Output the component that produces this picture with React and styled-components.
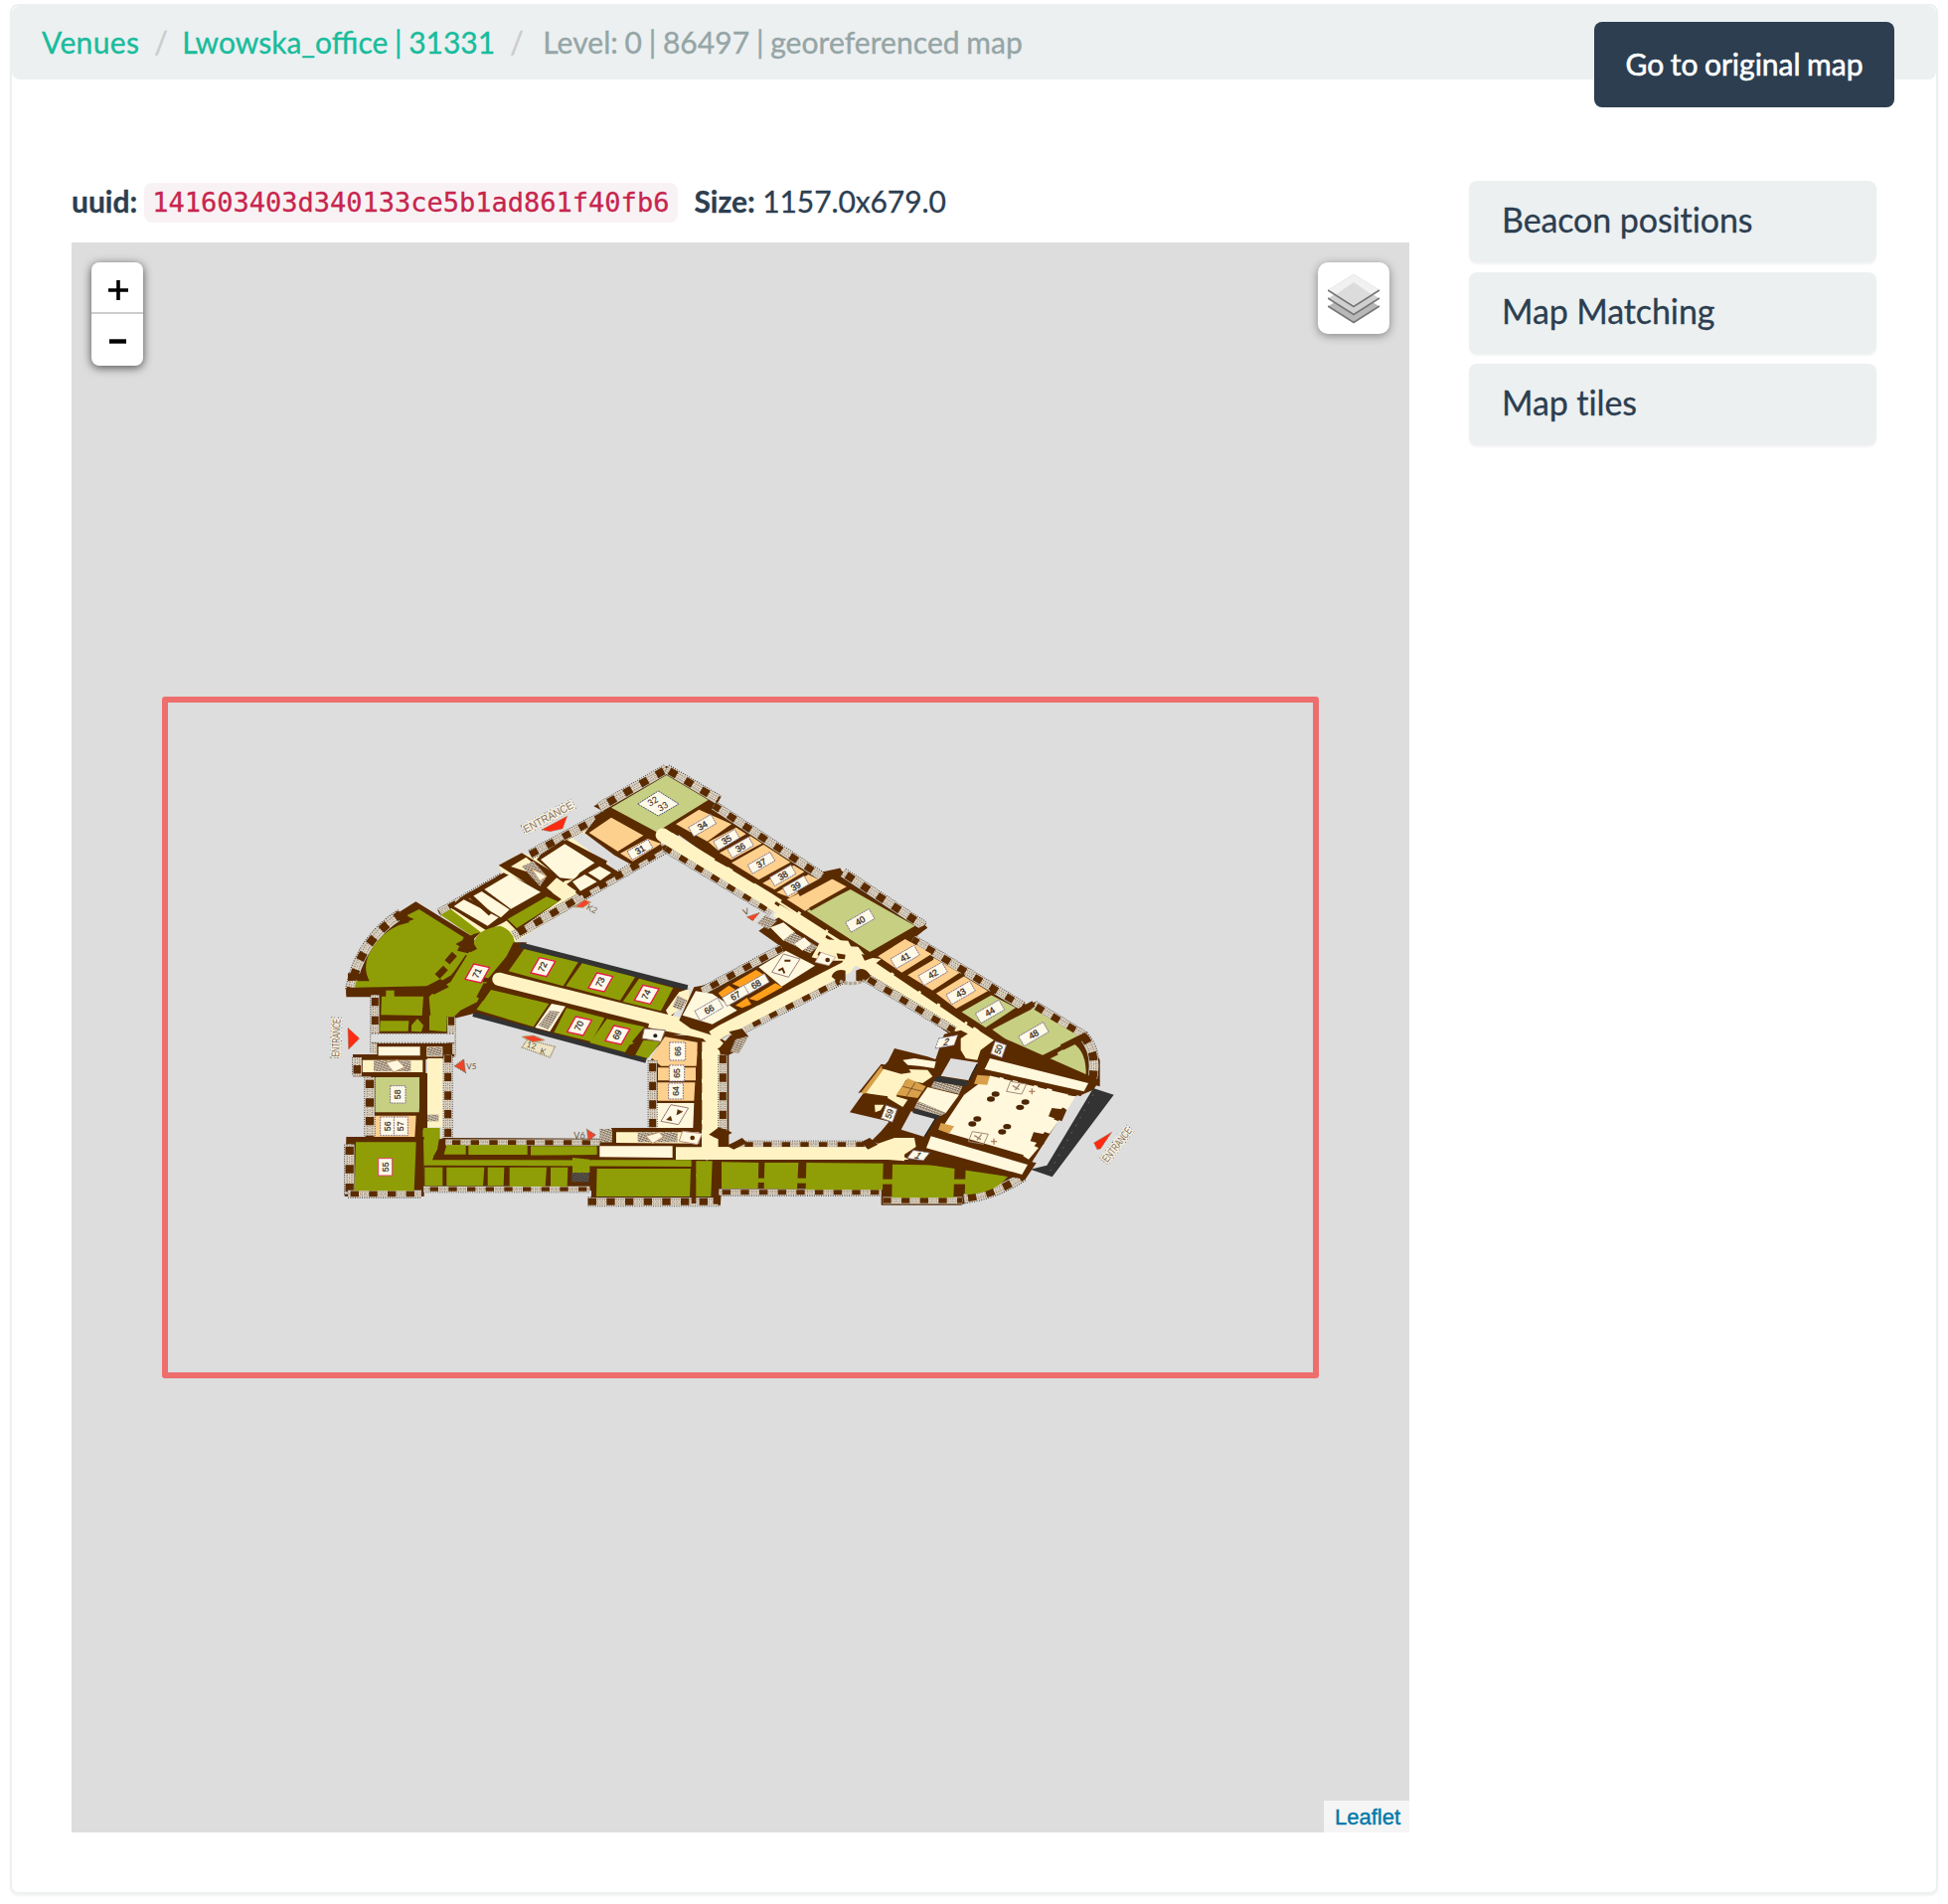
import React from "react";
import styled, { createGlobalStyle } from "styled-components";

const GlobalStyle = createGlobalStyle`
  *, *::before, *::after { box-sizing: border-box; }
  body {
    margin: 0;
    background: #fff;
    color: #2c3e50;
    font-family: Lato, "Liberation Sans", sans-serif;
    font-size: 30px;
  }
`;

const Page = styled.main`
  padding: 4px 10px 10px;
`;

const Panel = styled.section`
  height: 1902px;
  border: 2px solid #ecf0f1;
  border-radius: 8px;
  box-shadow: 0 2px 2px rgba(0, 0, 0, 0.05);
`;

const TopBar = styled.header`
  display: flex;
  align-items: flex-start;
  justify-content: space-between;
  height: 74px;
  padding: 0 42px 0 30px;
  background: #ecf0f1;
  border-radius: 8px;
`;

const Crumbs = styled.nav`
  display: flex;
  align-items: center;
  height: 72px;
  line-height: 42px;
  white-space: pre;
  -webkit-text-stroke-width: 0.35px;
`;

const CrumbLink = styled.a`
  color: #18bc9c;
  text-decoration: none;
  letter-spacing: ${(p) => p.$tracking || "0"};
  word-spacing: -1px;
`;

const CrumbText = styled.span`
  color: #95a5a6;
  letter-spacing: 0.07px;
  word-spacing: -1.1px;
`;

const Slash = styled.span`
  width: ${(p) => p.$width}px;
  padding-left: 15px;
  color: #ccc;
`;

const MapButton = styled.button`
  width: 302px;
  height: 86px;
  margin-top: 16px;
  padding: 0 0 2px;
  flex: none;
  border: 0;
  border-radius: 8px;
  background: #2c3e50;
  color: #fff;
  font: inherit;
  line-height: 42px;
  word-spacing: -1.2px;
  -webkit-text-stroke: 0.6px #fff;
`;

const Body = styled.div`
  display: grid;
  grid-template-columns: 1346px 410px;
  column-gap: 60px;
  padding: 102px 0 0 60px;
`;

const Info = styled.div`
  display: flex;
  align-items: flex-start;
  height: 62px;
  line-height: 40px;
  white-space: pre;
  -webkit-text-stroke-width: 0.3px;
`;

const SizeValue = styled.span`
  letter-spacing: -0.1px;
`;

const Code = styled.code`
  height: 40px;
  margin: 2px 16px 0 7px;
  padding: 0 9px 0 8px;
  border-radius: 8px;
  background: #f9f2f4;
  color: #c7254e;
  font: 27px/39px "DejaVu Sans Mono", monospace;
`;

const MapArea = styled.div`
  position: relative;
  height: 1600px;
  background: #ddd;
`;

const MapCanvas = styled.svg`
  display: block;
`;

const ZoomControl = styled.div`
  position: absolute;
  top: 20px;
  left: 20px;
  width: 52px;
  border-radius: 8px;
  background: #fff;
  box-shadow: 0 2px 10px rgba(0, 0, 0, 0.65);
`;

const ZoomButton = styled.a`
  display: flex;
  align-items: center;
  justify-content: center;
  height: 52px;
  padding: 5px 0 0 2px;
  &:first-child { border-bottom: 2px solid #ccc; }
  & + & { padding: 3px 0 0 1px; }
`;

const LayersControl = styled.a`
  position: absolute;
  top: 20px;
  right: 20px;
  display: flex;
  align-items: center;
  justify-content: center;
  width: 72px;
  height: 72px;
  border-radius: 10px;
  background: #fff;
  box-shadow: 0 2px 10px rgba(0, 0, 0, 0.4);
`;

const Attribution = styled.div`
  position: absolute;
  right: 0;
  bottom: 0;
  width: 86px;
  height: 32px;
  padding-left: 11px;
  background: rgba(255, 255, 255, 0.7);
  color: #0078a8;
  font: 22px/33px "Liberation Sans", sans-serif;
  -webkit-text-stroke-width: 0.4px;
`;

const Sidebar = styled.aside`
  display: flex;
  flex-direction: column;
  gap: 10px;
`;

const SideItem = styled.div`
  height: 82px;
  padding-left: 33px;
  border-radius: 8px;
  background: #ecf0f1;
  box-shadow: 0 2px 2px rgba(0, 0, 0, 0.05);
  font-size: 34px;
  line-height: 78px;
  font-variant-ligatures: no-common-ligatures;
  letter-spacing: -0.1px;
  -webkit-text-stroke-width: 0.3px;
`;

const C = {
  green: "#8f9e06",
  sage: "#c6cf82",
  peach: "#fed08e",
  cream: "#fff8dd",
  hall: "#fff3c4",
  brown: "#5b2b00",
  coal: "#333",
  orange: "#ff9f1c",
  floor: "#ddd",
  wood: "#d8a04a",
};

const Room = ({ p, f }) => <polygon points={p} fill={C[f]} />;

const Rooms = ({ list }) => list.map(([f, p], i) => <Room key={i} f={f} p={p} />);

const Line = ({ d, w = 12, c = "brown", dash }) => (
  <path d={d} fill="none" stroke={C[c]} strokeWidth={w} strokeDasharray={dash} />
);

/* outer wall: stone facing with window openings between brown piers */
const Facade = ({ d, w = 24, off = 0 }) => (
  <g fill="none">
    <path d={d} stroke="#3a3530" strokeWidth={w + 6} strokeDasharray="3 4" />
    <path d={d} stroke="#d6cdbd" strokeWidth={w + 1} />
    <path d={d} stroke="#8b7d70" strokeWidth={w * 0.62} strokeDasharray="3 4" />
    <path d={d} stroke="#e6dccb" strokeWidth={w * 0.34} />
    <path d={d} stroke="#9a8c7c" strokeWidth="2.5" strokeDasharray="9 3" />
    <path d={d} stroke={C.brown} strokeWidth={w - 3} strokeDasharray="25 31" strokeDashoffset={off} />
  </g>
);

/* numbered plate drawn inside a room */
const Plate = ({ x, y, t, w = 66, h = 30, r = -30, k = 0, s = 27 }) => (
  <g transform={`translate(${x} ${y}) rotate(${r}) skewX(${k})`}>
    <rect x={-w / 2} y={-h / 2} width={w} height={h} fill="#fff9e8" stroke="#77688a" strokeWidth="2.5" strokeDasharray="6 2" />
    <text textAnchor="middle" y={s * 0.36} fontSize={s} fill="#30261f" stroke="#30261f" strokeWidth="0.8" fontFamily="Liberation Sans, sans-serif">{t}</text>
  </g>
);

const Tall = ({ x, y, t, w = 44, h = 46, s = 26, hot, r = 0 }) => (
  <g transform={`translate(${x} ${y}) rotate(${r})`}>
    <rect x={-w / 2} y={-h / 2} width={w} height={h} fill="#fff9e8" stroke={hot ? "#d9436b" : "#77688a"} strokeWidth="3" strokeDasharray={hot ? undefined : "5 3"} />
    <text transform="rotate(-90)" textAnchor="middle" y={s * 0.36} fontSize={s} fill="#4a3a30" stroke="#4a3a30" strokeWidth="0.8" fontFamily="Liberation Sans, sans-serif">{t}</text>
  </g>
);

const Slanted = ({ x, y, t }) => (
  <g transform={`translate(${x} ${y})`}>
    <polygon points="-10,-28 38,-17 12,29 -36,18" fill="#fff9e8" stroke="#e8174b" strokeWidth="4" />
    <text transform="rotate(-66)" textAnchor="middle" y="9" fontSize="27" fill="#30261f" stroke="#30261f" strokeWidth="0.8" fontFamily="Liberation Sans, sans-serif">{t}</text>
  </g>
);

const Stairs = ({ p }) => (
  <g>
    <polygon points={p} fill="#efe4cf" />
    <polygon points={p} fill="url(#steps)" />
  </g>
);

const Entrance = ({ x, y, r, arrow, size = 33, len = 150 }) => (
  <g>
    <polygon points={arrow} fill="#ff2a12" stroke="#8a7a58" strokeWidth="3" strokeDasharray="3 4" />
    <g transform={`translate(${x} ${y}) rotate(${r})`} fontFamily="Liberation Sans, sans-serif" fontSize={size}>
      <rect x={-len / 2 - 3} y="-16" width={len + 6} height="31" fill="none" stroke="#4c453c" strokeWidth="3" strokeDasharray="3 6 2 9" />
      <text textAnchor="middle" y="11" textLength={len} lengthAdjust="spacingAndGlyphs" fill="#82725c" stroke="#f7f0e2" strokeWidth="9" paintOrder="stroke">ENTRANCE</text>
    </g>
  </g>
);

const NorthWest = () => (
  <g>
    <Room f="hall" p="865,205 1055,310 600,590 500,600 370,505 560,395 545,362 615,325 660,340" />
    <polygon points="765,278 800,264 925,342 945,365 905,385 865,352" fill="#ddd" />
    <Facade d="M1055 308L590 575" off={10} />
    <Facade d="M860 212L640 330" off={0} />
    <Facade d="M555 396L365 505" off={8} w={18} />
    <Room f="brown" p="545,362 615,325 745,405 735,430 690,455" />
    <Rooms
      list={[
        ["brown", "855,200 890,202 1030,275 1040,315 955,365 895,332 805,265"],
        ["peach", "885,218 982,272 905,320 818,264"],
        ["peach", "912,326 995,282 1036,297 950,350"],
        ["brown", "740,285 870,355 850,372 795,400 740,410 660,345 672,330"],
        ["cream", "672,345 745,298 835,355 790,385 775,405 730,400"],
        ["brown", "850,345 910,385 890,400 790,455 750,420"],
        ["cream", "815,385 850,365 885,385 852,408"],
        ["cream", "768,412 805,390 842,412 792,440"],
        ["brown", "430,460 560,385 690,440 700,450 560,535 510,560 400,490"],
        ["cream", "502,435 578,390 672,443 582,494"],
        ["cream", "455,462 494,441 578,496 552,520"],
        ["cream", "410,486 440,466 545,520 512,545"],
        ["hall", "582,366 628,338 660,365 640,385"],
        ["hall", "690,430 720,400 780,440 740,472"],
        ["brown", "560,520 700,440 735,465 600,560"],
        ["green", "572,525 690,457 725,472 600,552"],
        ["green", "370,512 400,494 492,565 470,580"],
      ]}
    />
    <Stairs p="615,365 650,350 690,395 670,425" />
    <path d="M640 370L690 395L670 410L650 380Z" fill="#fff7e0" stroke="#c79a68" strokeWidth="3" />
    <Line d="M460 455L520 510M745 290L870 355" w={13} />

    <path d="M295 472L470 580L480 625L400 730L340 760H85V735L110 690Q130 560 250 500Z" fill={C.brown} />
    <Facade d="M250 510Q125 590 98 740" off={5} w={28} />
    <path d="M270 512L305 495L440 580L420 620L462 630L400 695L330 735H110L115 712H155Q125 655 180 590Q220 545 275 535Z" fill={C.green} />
    <Line d="M450 635L395 715" w={10} />
    <Line d="M412 630L390 655M385 672L360 698" w={20} />
    <path d="M90 688L145 690L152 708L90 712ZM235 500L290 525L250 540Z" fill={C.brown} />
    <path d="M470 600Q475 555 550 545Q595 560 595 610L555 680L520 700L475 790L430 815H335L345 750L400 715L440 650Z" fill={C.green} />
    <path d="M415 600L470 570L490 565L465 590L480 615L460 625Z" fill={C.brown} />
    <path d="M590 595H630L580 690L545 685Z" fill={C.brown} />

    <Room f="brown" p="600,600 1120,735 1050,850 500,720" />
    <Line d="M610 603L1115 732" w={17} c="coal" />
    <Rooms
      list={[
        ["green", "622,615 785,655 740,727 575,682"],
        ["green", "797,658 957,700 912,770 748,727"],
        ["green", "969,704 1072,732 1035,802 920,774"],
        ["hall", "1090,745 1120,735 1120,775 1060,820 1050,800"],
      ]}
    />
    <Stairs p="1085,755 1115,770 1095,800 1070,790" />
    <Slanted x={678} y={669} t="72" />
    <Slanted x={852} y={715} t="73" />
    <Slanted x={991} y={752} t="74" />
    <Plate x={972} y={315} t="31" r={-30} w={72} />
    <Entrance x={695} y={217} r={-28} arrow="675,255 752,214 738,252 700,260" len={165} />
    <polygon points="775,488 805,466 822,474 800,490" fill="#f4432a" stroke="#a99568" strokeWidth="4" strokeDasharray="3 3" />
    <text transform="translate(808 494) rotate(28)" fontSize="26" fill="#7d6842">K2</text>
  </g>
);

const SouthWest = () => (
  <g>
    <Room f="brown" p="500,10 1170,170 1050,190 985,265 470,120" />
    <Line d="M468 122L990 262" w={15} c="coal" />
    <Rooms
      list={[
        ["green", "522,48 697,90 650,160 478,108"],
        ["cream", "705,90 747,98 700,174 655,162"],
        ["green", "750,103 865,133 825,205 712,177"],
        ["green", "872,136 985,160 948,205 965,218 975,200 1035,203 995,255 820,208"],
        ["brown", "940,215 985,195 955,250 925,240"],
      ]}
    />
    <Stairs p="700,110 730,115 695,168 665,155" />
    <Slanted x={788} y={157} t="70" />
    <Slanted x={903} y={184} t="69" />
    <path d="M546 16L1000 130L1170 172" fill="none" stroke={C.hall} strokeWidth="40" strokeLinecap="round" />

    <Room f="brown" p="85,42 400,35 520,40 470,120 410,135 410,180 160,180 160,62 85,62" />
    <path d="M335 70L345 60L400 25H510L480 85L430 110L410 130L340 128Z" fill={C.green} />
    <path d="M318 42L370 15L395 40L350 62Z" fill={C.brown} />
    <path d="M500 28L530 32L500 80L478 70Z" fill={C.brown} />
    <Slanted x={480} y={-2} t="71" />
    <Rooms
      list={[
        ["green", "192,68 318,68 314,126 190,124"],
        ["green", "188,142 274,142 272,173 185,173"],
        ["green", "282,155 300,135 318,155 312,175 282,173"],
        ["green", "336,125 390,128 388,175 336,170"],
        ["green", "205,50 230,50 230,70 205,70"],
      ]}
    />
    <Facade d="M172 64V240" off={-8} />
    <Facade d="M402 130V250" off={0} w={22} />
    <rect x="160" y="180" width="252" height="28" fill="#ddd" />
    <path d="M162 180H410M162 208H410" stroke="#75695a" strokeWidth="4" strokeDasharray="4 5" />
    <Room f="brown" p="178,210 405,210 405,255 325,258 325,312 105,310 105,243 178,243" />
    <Rooms
      list={[
        ["cream", "182,220 308,220 308,247 182,247"],
        ["cream", "328,220 376,220 376,250 328,250"],
        ["hall", "134,260 316,260 316,297 134,297"],
        ["brown", "160,300 330,300 330,500 155,500"],
        ["sage", "172,312 312,312 305,418 172,418"],
        ["peach", "168,428 296,428 292,495 165,495"],
      ]}
    />
    <Stairs p="168,262 280,262 280,295 168,295" />
    <path d="M205 268L240 260L262 282L228 297Z" fill="#fff7e0" stroke="#b98f68" strokeWidth="3" />
    <Stairs p="330,222 374,222 374,248 330,248" />
    <Facade d="M118 252V308" off={-24} w={26} />
    <Facade d="M156 312V495" off={-8} w={28} />
    <Facade d="M392 245V505" off={2} />
    <rect x="330" y="255" width="46" height="208" fill={C.hall} />
    <rect x="316" y="465" width="52" height="100" fill={C.green} />
    <Line d="M312 310V470" w={12} />
    <Stairs p="330,425 364,425 364,445 330,445" />
    <Tall x={241} y={364} t="58" w={46} h={52} />
    <Tall x={209} y={460} t="56" w={42} h={56} />
    <Tall x={250} y={460} t="57" w={42} h={56} />

    <Room f="brown" p="85,492 320,492 320,672 80,672" />
    <Facade d="M95 515V665" off={-6} w={28} />
    <Facade d="M90 664H312" off={-8} w={20} />
    <Room f="green" p="114,508 296,508 290,655 110,655" />
    <Tall x={203} y={583} t="55" w={42} h={52} hot />

    <Room f="brown" p="320,515 380,495 1225,500 1215,695 825,695 825,655 318,650" />
    <Facade d="M385 509H850" off={-20} w={18} />
    <Facade d="M318 650H820" off={-20} w={16} />
    <Facade d="M815 688H1215" off={0} w={24} />
    <Rooms
      list={[
        ["green", "318,500 365,500 360,530 350,548 345,562 1130,562 1130,582 320,578"],
        ["green", "388,517 446,517 446,545 380,545"],
        ["green", "454,517 632,517 632,546 454,546"],
        ["green", "642,520 842,520 842,546 642,548"],
        ["brown", "350,546 825,550 825,562 350,560"],
        ["green", "322,584 376,584 376,640 322,640"],
        ["green", "388,584 502,584 498,640 388,640"],
        ["green", "512,584 562,584 560,640 512,640"],
        ["green", "578,584 690,584 686,642 578,642"],
        ["green", "702,584 754,584 752,642 702,642"],
        ["green", "768,555 820,560 820,600 768,600"],
        ["green", "842,588 1125,588 1122,672 840,672"],
        ["green", "1140,565 1190,565 1186,672 1140,672"],
        ["green", "1220,565 1330,565 1330,645 1220,645"],
        ["coal", "765,600 818,600 818,630 765,626"],
      ]}
    />
    <rect x="766" y="600" width="52" height="28" fill="url(#steps)" />

    <Room f="brown" p="1045,185 1200,185 1240,210 1240,560 890,520 885,465 1015,465 1000,270" />
    <Rooms
      list={[
        ["peach", "1047,190 1147,207 1142,278 1035,278 1005,252"],
        ["peach", "1026,283 1140,283 1140,322 1026,322"],
        ["peach", "1024,328 1138,328 1135,383 1024,383"],
        ["cream", "1018,390 1135,390 1132,465 1018,465"],
        ["hall", "900,478 1150,478 1150,512 900,510"],
        ["cream", "850,520 1070,520 1070,555 850,553"],
        ["hall", "1080,528 1330,520 1330,562 1080,555"],
      ]}
    />
    <Stairs p="850,468 888,468 888,508 850,508" />
    <Stairs p="965,478 1085,478 1085,508 965,508" />
    <polygon points="990,490 1030,478 1042,492 1010,512" fill="#fff7e0" stroke="#b98f68" strokeWidth="3" />
    <polygon points="1100,475 1160,482 1145,515 1090,505" fill="#fff7e0" stroke="#b58b82" strokeWidth="3" />
    <circle cx="1130" cy="495" r="7" fill={C.brown} />
    <Facade d="M1010 262V465" off={-8} />
    <Facade d="M1222 215V480" off={2} />
    <path d="M1000 145L1170 180L1210 220L1205 460L1180 520L1160 555" fill="none" stroke={C.hall} strokeWidth="34" />
    <rect x="1158" y="205" width="50" height="350" fill={C.hall} />
    <Line d="M1152 205V470" w={14} dash="30 22 60 12" />
    <path d="M1190 490L1225 465L1250 480L1210 500ZM1230 520L1275 500L1290 515L1270 530ZM1245 185L1285 178L1275 220L1215 245L1210 225Z" fill={C.brown} />
    <Line d="M1204 540V695" w={22} dash="75 8 80" />
    <Line d="M1134 555V695" w={14} dash="50 8 80" />
    <Tall x={1085} y={234} t="66" w={48} h={54} />
    <Tall x={1083} y={300} t="65" w={46} h={48} />
    <Tall x={1080} y={354} t="64" w={44} h={48} />
    <polygon points="1065,395 1118,405 1088,455 1035,445" fill="#fff9e8" stroke="#9b7a74" strokeWidth="3" />
    <path d="M1052 440L1064 430L1068 443ZM1085 410L1100 416L1082 426" fill={C.brown} stroke={C.brown} strokeWidth="2" />
    <polygon points="985,165 1048,170 1035,205 978,195" fill="#fff9e8" stroke="#8b6a64" strokeWidth="3" />
    <circle cx="1018" cy="187" r="6" fill="#222" />
    <Entrance x={55} y={193} r={-88} arrow="90,163 125,195 92,228" len={115} size={34} />
    <polygon points="412,278 440,258 445,298" fill="#f4432a" stroke="#7c6b4c" strokeWidth="4" strokeDasharray="3 3" />
    <text x="448" y="288" fontSize="24" fill="#665840">V5</text>
    <polygon points="838,486 812,470 816,505" fill="#f4432a" stroke="#7c6b4c" strokeWidth="4" strokeDasharray="3 3" />
    <text x="772" y="498" fontSize="27" fill="#665840">V6</text>
    <polygon points="632,198 715,220 700,252 616,222" fill="#efe5c7" stroke="#8a7a58" strokeWidth="4" strokeDasharray="3 3" />
    <polygon points="615,190 650,186 684,200 648,206" fill="#f4432a" stroke="#b09b6e" strokeWidth="3" />
    <text transform="translate(628 220) rotate(16)" fontSize="25" fill="#5e5340">12</text>
    <text transform="translate(668 240) rotate(16)" fontSize="25" fill="#5e5340">K</text>
  </g>
);

const East = () => (
  <g>
    {/* room 32/33 */}
    <Room f="brown" p="-148,-88 12,14 -5,38 -130,115 -170,140 -368,34" />
    <Facade d="M-148 -78L-350 38" off={-10} w={26} />
    <Facade d="M-148 -78L10 16" off={-10} w={26} />
    <Room f="sage" p="-148,-60 -22,15 -178,112 -315,38" />
    <g transform="translate(-173 25)">
      <polygon points="0,-37 62,2 0,38 -62,2" fill="#fff9e8" stroke="#4a5a72" strokeWidth="3" strokeDasharray="6 2" />
      <text transform="translate(-16 -4) rotate(-30)" textAnchor="middle" y="7" fontSize="27" fill="#30261f">32</text>
      <text transform="translate(15 12) rotate(-30)" textAnchor="middle" y="7" fontSize="27" fill="#30261f">33</text>
    </g>

    {/* north-east wing */}
    <Room f="brown" p="-140,100 -15,20 310,235 370,222 640,400 600,432 930,635 965,625 1115,722 1160,800 1160,880 780,780 420,500" />
    <Facade d="M-5 32L320 246" off={4} />
    <Facade d="M385 235L630 397" off={-12} w={26} />
    <Facade d="M595 436L930 640" off={6} />
    <Facade d="M960 636L1110 728Q1155 780 1136 865" off={-8} w={28} />
    <Facade d="M-150 160L170 352" off={6} />
    <path d="M-160 121L160 316L420 486L780 725" fill="none" stroke={C.hall} strokeWidth="42" strokeLinecap="round" />
    <Line d="M180 325L400 470" w={9} />
    <path d="M184 348L330 432" stroke={C.hall} strokeWidth="40" />
    <Rooms
      list={[
        ["peach", "-120,88 -50,44 48,88 -25,140"],
        ["peach", "-22,142 62,98 92,118 8,168"],
        ["peach", "12,175 105,124 140,146 48,196"],
        ["peach", "48,205 145,150 226,203 130,256"],
        ["peach", "142,266 236,212 268,232 178,286"],
        ["peach", "184,294 280,240 312,256 225,310"],
        ["peach", "345,250 398,278 270,350 215,315"],
        ["sage", "407,285 602,395 466,474 275,350"],
        ["peach", "490,487 572,435 652,480 562,536"],
        ["peach", "575,541 660,492 736,537 655,590"],
        ["peach", "664,598 748,546 822,592 726,645"],
        ["sage", "742,655 830,603 906,642 815,702"],
        ["sage", "835,708 957,645 1095,727 965,802"],
      ]}
    />
    <path d="M985 805L1080 750Q1120 775 1118 848Z" fill={C.sage} />
    <Line d="M0 190L40 212M55 222L120 262M-140 100L-110 118M-50 150L-30 162" w={14} />
    <Line d="M250 298L380 228M1045 762L1120 725M975 802L1030 775M905 660L960 630" w={19} />
    <Line d="M285 345L405 278" w={11} />
    <Line d="M455 485L530 455M545 440L635 398M560 548L655 492M650 602L750 540M730 655L845 590" w={12} />
    <Line d="M200 318L470 490L780 700" w={13} dash="60 10 90 8" />
    <path d="M375 455L430 458L455 490L500 495L470 520L390 515L340 490L345 440Z" fill={C.hall} />
    <Plate x={-40} y={92} t="34" w={78} h={32} />
    <Plate x={33} y={135} t="35" w={74} />
    <Plate x={75} y={158} t="36" w={74} />
    <Plate x={138} y={205} t="37" w={78} />
    <Plate x={203} y={243} t="38" w={74} />
    <Plate x={242} y={275} t="39" w={74} />
    <Plate x={436} y={379} t="40" w={82} h={34} />
    <Plate x={572} y={489} t="41" w={82} h={34} />
    <Plate x={656} y={540} t="42" w={82} h={34} />
    <Plate x={740} y={597} t="43" w={82} h={34} />
    <Plate x={828} y={654} t="44" w={82} h={34} />
    <Plate x={960} y={722} t="48" w={86} h={34} />

    {/* connecting wing */}
    <Room f="brown" p="190,370 360,480 390,480 380,530 20,735 -75,705 -110,680 -65,580 -10,570 200,460 130,410" />
    <Facade d="M200 463L-40 592" off={6} w={22} />
    <Facade d="M385 556L85 706" off={0} w={22} />
    <path d="M420 480L395 520L20 712L-10 730" fill="none" stroke={C.hall} strokeWidth="38" />
    <Rooms
      list={[
        ["cream", "165,400 205,385 240,415 205,440"],
        ["hall", "320,435 400,440 430,500 330,500 290,490"],
        ["cream", "130,520 212,470 300,515 200,578"],
        ["orange", "50,570 122,528 150,545 85,585"],
        ["orange", "8,598 40,575 60,588 20,612"],
        ["orange", "100,615 180,568 202,580 125,622"],
        ["orange", "60,635 95,612 108,632 80,643"],
        ["cream", "-100,665 -60,592 -10,600 65,650 -10,692"],
      ]}
    />
    <Line d="M310 478L352 500" w={12} />
    <Stairs p="125,388 150,362 185,380 160,405" />
    <Stairs p="205,438 235,415 308,458 285,478" />
    <polygon points="238,450 268,430 288,450 262,470" fill="#fff7e0" />
    <Plate x={122} y={571} t="68" w={76} />
    <Plate x={60} y={606} t="67" w={76} />
    <Plate x={-20} y={647} t="66" w={80} h={34} />
    <polygon points="205,480 255,495 220,550 170,535" fill="#fff9e8" stroke="#9b7a74" strokeWidth="3" />
    <path d="M190 530L202 524L208 538M208 500L226 500" fill="none" stroke={C.brown} strokeWidth="6" />
    <polygon points="318,475 362,490 342,515 300,505" fill="#fff9e8" stroke="#b58b82" strokeWidth="2" />
    <circle cx="338" cy="498" r="7" fill={C.brown} />
    <Facade d="M455 552L720 712" off={-8} w={22} />
    <path d="M350 548Q360 522 392 530V560Q375 572 350 548M424 530Q450 515 468 546Q450 570 424 560ZM440 480L480 490L450 500ZM365 478L392 482L390 496L370 494Z" fill={C.brown} />
    <path d="M375 562Q410 577 450 560" fill="none" stroke="#b3a58d" strokeWidth="10" strokeDasharray="10 4" />
    <path d="M40 715L80 705L100 730L60 735ZM5 765L40 758L60 775L30 790Z" fill={C.brown} />
    <Stairs p="60,738 100,728 70,780 45,775" />
    <polygon points="95,368 133,355 112,380" fill="#f4432a" stroke="#8c6845" strokeWidth="3" strokeDasharray="3 3" />
    <text transform="translate(86 364) rotate(-20)" fontSize="26" fill="#675444">V</text>

    {/* south wing */}
    <Facade d="M22 785V1015" off={0} w={24} />
    <Facade d="M70 1055H480" off={-18} w={18} />
    <Room f="brown" p="-10,1095 620,1095 750,1120 935,1155 740,1238 500,1238 500,1205 0,1205" />
    <path d="M-120 1082H600" stroke={C.hall} strokeWidth="38" />
    <Facade d="M10 1199H500" off={-10} w={18} />
    <Facade d="M505 1224H745" off={0} w={20} />
    <Facade d="M750 1218Q840 1208 930 1150" off={-12} w={26} />
    <Rooms
      list={[
        ["green", "18,1108 130,1110 128,1188 18,1188"],
        ["green", "148,1110 250,1110 246,1190 146,1188"],
        ["green", "274,1110 506,1112 504,1192 272,1192"],
        ["green", "534,1115 722,1118 718,1216 532,1216"],
        ["green", "125,1157 150,1157 150,1170 125,1170"],
        ["green", "240,1157 280,1157 280,1172 240,1172"],
        ["green", "495,1160 540,1160 540,1175 495,1175"],
        ["green", "712,1160 770,1160 770,1175 712,1175"],
      ]}
    />
    <path d="M755 1125L882 1152Q840 1205 752 1206Z" fill={C.green} />
    <path d="M-20 1025L10 1003L45 1018L0 1035ZM35 1060L80 1035L95 1050L55 1070Z" fill={C.brown} />

    {/* main hall and portico */}
    <path d="M690 722L740 710L790 735L850 725L1160 862L1140 890L1105 905L935 1160L600 1110L510 1060L470 1045L500 1015L550 955L585 915L620 865L665 795Z" fill={C.brown} />
    <path d="M540 765L640 790L670 800L650 880L600 935L575 960L535 1000L520 985L405 958L450 895L430 900L500 812L515 815Z" fill={C.brown} />
    <Room f="hall" p="740,735 785,705 840,740 800,770 790,800 755,795 740,770" />
    <Room f="hall" p="470,1060 540,1035 600,1035 605,1062 570,1085 570,1105 480,1098" />
    <path d="M440 1048L465 1035L490 1055L460 1070ZM500 1015L545 1005L555 1030L520 1040Z" fill={C.brown} />
    <Rooms
      list={[
        ["floor", "710,795 792,808 765,862 680,848"],
        ["floor", "590,955 665,975 630,1032 560,1010"],
        ["coal", "670,848 765,865 755,880 655,865"],
        ["coal", "600,945 680,965 670,980 595,960"],
        ["hall", "505,825 640,830 655,850 625,870 575,860 545,910 580,920 565,942 515,912 447,900"],
        ["wood", "500,818 510,824 452,903 438,899"],
        ["wood", "580,855 635,880 610,915 545,905"],
        ["cream", "565,800 600,795 665,805 660,825 615,818 580,815"],
        ["cream", "640,882 735,905 695,960 610,925"],
        ["cream", "828,795 1125,870 1112,895 812,828"],
        ["cream", "650,1030 942,1116 925,1146 636,1066"],
        ["cream", "830,845 1065,900 1050,940 940,1090 700,1020 690,995 750,905"],
        ["wood", "790,845 828,848 820,875 780,872"],
        ["wood", "680,990 720,1000 705,1022 672,1010"],
        ["floor", "1085,905 1140,918 1000,1118 955,1108"],
        ["cream", "1058,905 1086,910 1062,950 1040,940"],
        ["cream", "1010,975 1035,985 1008,1022 986,1015"],
        ["cream", "950,1055 975,1065 945,1100 928,1090"],
        ["coal", "1140,885 1202,905 1016,1153 950,1130 1000,1118"],
        ["brown", "1015,945 1060,950 1045,985 1005,970"],
        ["brown", "960,1018 1000,1025 990,1055 950,1045"],
      ]}
    />
    <path d="M603 868L577 908M565 880L625 895" stroke="#80552a" strokeWidth="3" />
    <Stairs p="660,865 745,880 735,902 650,882" />
    <Stairs p="610,925 695,960 680,968 600,945" />
    <path d="M810 838L1090 905M655 1025L920 1100" fill="none" stroke={C.brown} strokeWidth="10" strokeDasharray="50 12 28 16" />
    <path d="M500 825L525 800L575 815L590 838L560 842ZM450 900L520 910L515 928L475 930L470 950L430 955Z" fill={C.brown} />
    <Room f="hall" p="480,935 508,935 498,952 482,958" />
    <g fill="#4c2505">
      {[[845, 903], [831, 918], [935, 927], [919, 943], [790, 978], [775, 993], [880, 1001], [865, 1017]].map(([x, y]) => (
        <ellipse key={`${x}-${y}`} cx={x} cy={y} rx="12" ry="8" />
      ))}
    </g>
    {[[908, 883], [793, 1034]].map(([x, y]) => (
      <g key={x} transform={`translate(${x} ${y})`} fill="none" stroke="#a38a78">
        <path d="M-18 -18L30 -10L16 20L-30 12Z" strokeWidth="3" />
        <path d="M-12 -6L8 6M10 -10L-4 8" strokeWidth="4" />
        <path d="M38 12H56M47 3V21" stroke="#b27e60" strokeWidth="4" />
      </g>
    ))}
    <path d="M790 812L775 840L765 862M665 975L630 1032" fill="none" stroke="#222" strokeWidth="4" />
    <path d="M1140 905L1010 1135" fill="none" stroke="#a98155" strokeWidth="3" strokeDasharray="3 23" />
    <Plate x={697} y={745} t="2" w={58} h={28} r={-10} k={-30} />
    <Tall x={854} y={768} t="50" w={36} h={40} r={20} />
    <Tall x={524} y={962} t="59" w={36} h={42} r={20} />
    <Plate x={612} y={1088} t="1" w={50} h={26} r={8} k={-30} />
    <Entrance x={1212} y={1056} r={-52} arrow="1142,1050 1196,1018 1162,1068 1152,1070" len={122} />
  </g>
);

const FloorPlan = () => (
  <MapCanvas width="1346" height="1600" viewBox="0 0 1346 1600">
    <defs>
      <pattern id="steps" width="9" height="7" patternUnits="userSpaceOnUse" patternTransform="rotate(20)">
        <path d="M0 1H7M2 4H9" stroke="#6e5d4d" strokeWidth="2.4" />
      </pattern>
    </defs>
    <g transform="translate(248 506) scale(0.33333)"><NorthWest /></g>
    <g transform="translate(248 736) scale(0.33333)"><SouthWest /></g>
    <g transform="translate(648 556) scale(0.33333)"><East /></g>
    <rect x="94" y="460" width="1158" height="680" fill="none" stroke="#f00" strokeOpacity="0.5" strokeWidth="6" strokeLinejoin="round" />
  </MapCanvas>
);

const LayersIcon = () => (
  <svg width="52" height="52" viewBox="0 0 52 52">
    <path d="M0 34.500L26 51L52 34.500L26 18Z" fill="#b8b8b8" />
    <path d="M0 34L26 50.500L52 34" fill="none" stroke="#777" strokeWidth="1.6" />
    <path d="M0 26.500L26 43L52 26.500L26 10Z" fill="#d0d0d0" />
    <path d="M0 26L26 42.500L52 26" fill="none" stroke="#777" strokeWidth="1.6" />
    <path d="M0 18L26 34L52 18L26 2Z" fill="#f1f1f1" stroke="#ddd" strokeWidth="0.6" />
    <path d="M8.500 22L26 10L43.500 22L26 33Z" fill="#dcdcdc" />
    <path d="M0 18L26 34.500L52 18" fill="none" stroke="#777" strokeWidth="1.8" />
  </svg>
);

const sections = ["Beacon positions", "Map Matching", "Map tiles"];

export default function App() {
  return (
    <Page>
      <GlobalStyle />
      <Panel>
        <TopBar>
          <Crumbs>
            <CrumbLink $tracking="0.35px">Venues</CrumbLink>
            <Slash $width={43}>/</Slash>
            <CrumbLink>Lwowska_office | 31331</CrumbLink>
            <Slash $width={48}>/</Slash>
            <CrumbText>Level: 0 | 86497 | georeferenced map</CrumbText>
          </Crumbs>
          <MapButton>Go to original map</MapButton>
        </TopBar>
        <Body>
          <div>
            <Info>
              <b>uuid:</b>
              <Code>141603403d340133ce5b1ad861f40fb6</Code>
              <b>Size:</b>
              <SizeValue> 1157.0x679.0</SizeValue>
            </Info>
            <MapArea>
              <FloorPlan />
              <ZoomControl>
                <ZoomButton>
                  <svg width="22" height="22" viewBox="0 0 22 22"><path d="M1 11H21M11 1V21" stroke="#000" strokeWidth="3.600" /></svg>
                </ZoomButton>
                <ZoomButton>
                  <svg width="17" height="5" viewBox="0 0 17 5"><path d="M0 2.500H17" stroke="#000" strokeWidth="4.400" /></svg>
                </ZoomButton>
              </ZoomControl>
              <LayersControl><LayersIcon /></LayersControl>
              <Attribution>Leaflet</Attribution>
            </MapArea>
          </div>
          <Sidebar>
            {sections.map((name) => <SideItem key={name}>{name}</SideItem>)}
          </Sidebar>
        </Body>
      </Panel>
    </Page>
  );
}
